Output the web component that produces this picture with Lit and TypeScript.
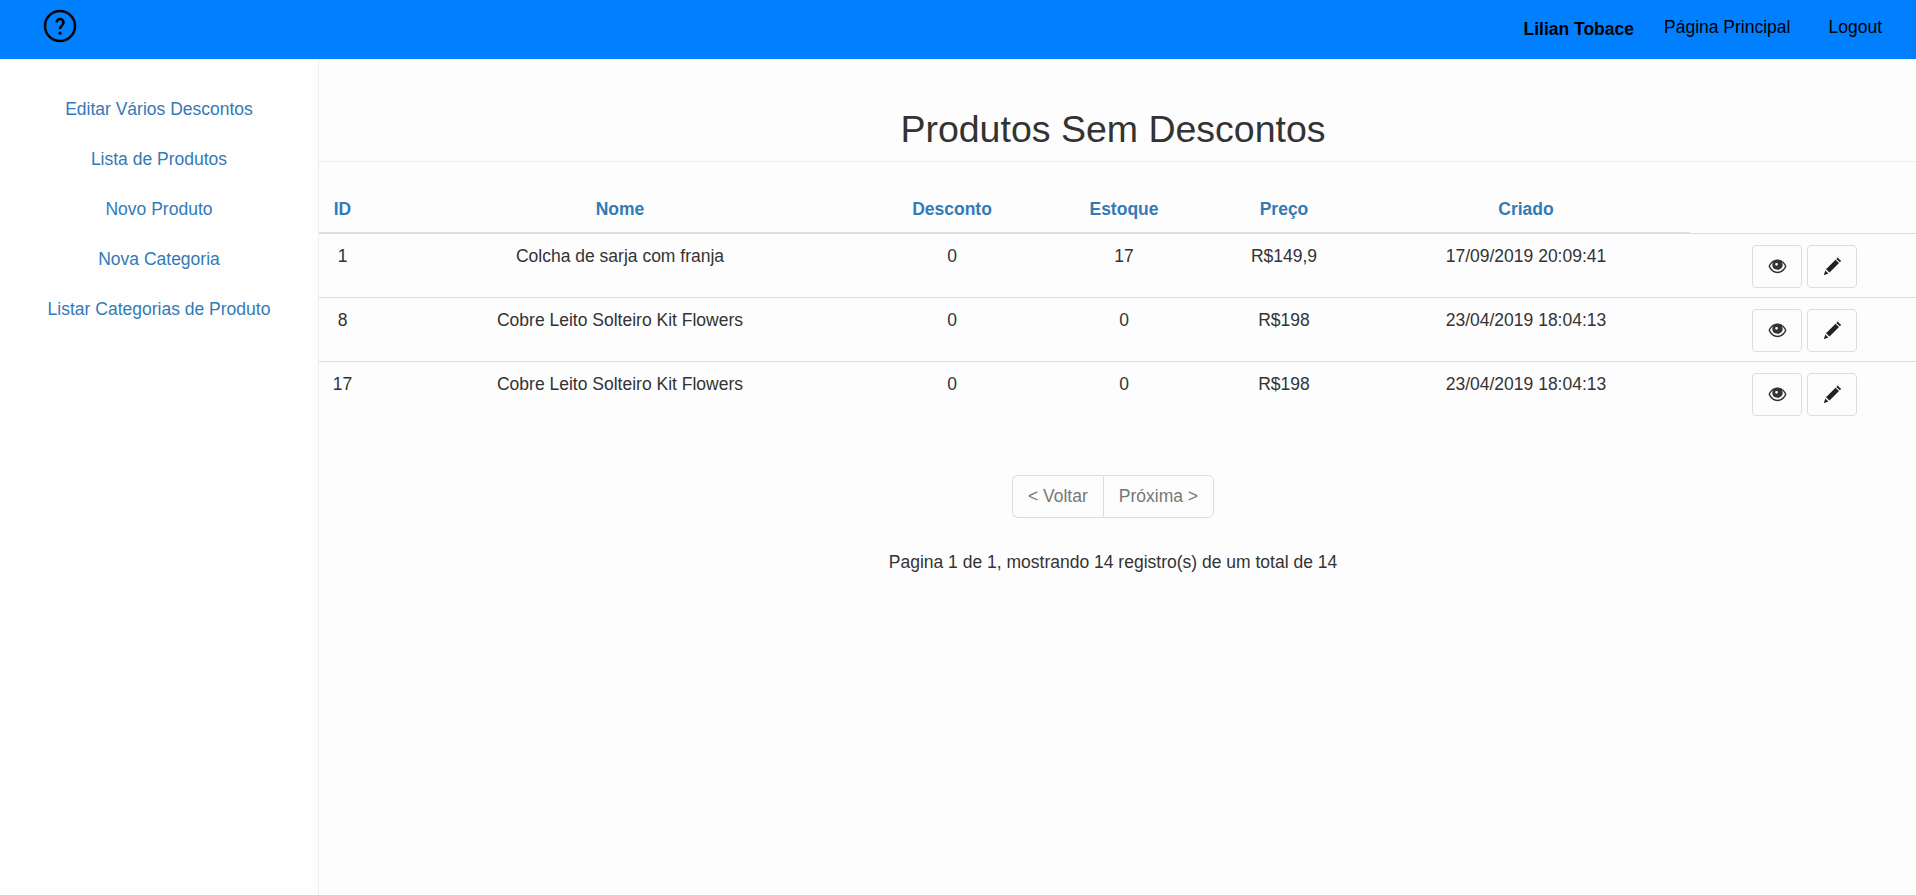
import { LitElement, html, css } from "lit";
import { customElement } from "lit/decorators.js";

const sideLinks = [
  "Editar Vários Descontos",
  "Lista de Produtos",
  "Novo Produto",
  "Nova Categoria",
  "Listar Categorias de Produto",
];

const columns = ["ID", "Nome", "Desconto", "Estoque", "Preço", "Criado"];

const rows = [
  ["1", "Colcha de sarja com franja", "0", "17", "R$149,9", "17/09/2019 20:09:41"],
  ["8", "Cobre Leito Solteiro Kit Flowers", "0", "0", "R$198", "23/04/2019 18:04:13"],
  ["17", "Cobre Leito Solteiro Kit Flowers", "0", "0", "R$198", "23/04/2019 18:04:13"],
];

const eyeIcon = html`<svg class="icon" width="19" height="15" viewBox="0 0 19 15">
  <path
    fill="#333"
    fill-rule="evenodd"
    d="M9.500.5c3.900 0 7.300 2.600 9 6.800-1.700 4.300-5.100 6.900-9 6.900s-7.300-2.600-9-6.900C2.200 3.100 5.600.5 9.500.5zM5.300 3.200C3.900 4.100 2.800 5.500 2 7.300c1.700 3.500 4.300 5.400 7.500 5.400s5.800-1.900 7.500-5.400c-.8-1.800-1.900-3.200-3.300-4.100.6.800 1 1.800 1 2.900 0 2.800-2.300 4.700-5.200 4.700S4.300 8.900 4.300 6.100c0-1.100.4-2.100 1-2.900zm3.200.7a1.400 1.400 0 1 0 0 2.800 1.400 1.400 0 0 0 0-2.800z"
  />
</svg>`;

const pencilIcon = html`<svg class="icon" width="19" height="19" viewBox="0 0 19 19">
  <path fill="#222" d="M14.600.6l3.500 3.300-1.300 1.300-3.500-3.300zM12.500 2.800l3.500 3.300-9.500 9.500-3.500-3.300zM2.300 13.400l3.100 3-4.600 1.900z" />
</svg>`;

@customElement("app-root")
export class AppRoot extends LitElement {
  static override styles = css`
    :host {
      display: block;
      min-height: 895px;
      background: #fdfdfd;
      color: #333;
      font-family: "Liberation Sans", Arial, sans-serif;
      font-size: 17.5px;
    }

    .topbar {
      display: flex;
      justify-content: space-between;
      height: 59px;
      background: #007fff;
      color: #000;
    }
    .help {
      display: block;
      margin: 9px 0 0 43px;
    }
    .userNav {
      display: flex;
      padding-right: 34px;
      line-height: 54px;
    }
    .userNav .user {
      margin-right: 30px;
      font-weight: 700;
      line-height: 58px;
    }
    .userNav .home {
      margin-right: 38px;
    }

    .body {
      display: flex;
      min-height: 836px;
    }

    .sidebar {
      box-sizing: border-box;
      flex: 0 0 319px;
      padding-top: 25px;
      border-right: 1px solid #eee;
      background: #fefefe;
      text-align: center;
      line-height: 50px;
    }
    .sidebar a {
      display: block;
      color: #337ab7;
    }

    .content {
      flex: 1;
      min-width: 0;
    }
    h1 {
      margin: 0;
      padding: 49px 9px 0 0;
      height: 53px;
      border-bottom: 1px solid #eee;
      font-size: 37.5px;
      font-weight: 400;
      line-height: 42px;
      text-align: center;
    }

    .tableHead,
    .row {
      display: grid;
      text-align: center;
    }
    .headWrap {
      margin-top: 24px;
      border-bottom: 1px solid #ddd;
    }
    .tableHead {
      grid-template-columns: 47px 508px 156px 188px 132px 340px;
      width: 1371px;
      height: 46px;
      border-bottom: 2px solid #ddd;
      margin-bottom: -1px;
      color: #337ab7;
      font-weight: 700;
      line-height: 22px;
    }
    .tableHead div {
      padding-top: 12px;
    }
    .tableHead div:last-child {
      padding-left: 12px;
    }
    .row {
      grid-template-columns: 47px 508px 156px 188px 132px 352px 1fr;
      box-sizing: border-box;
      height: 64px;
      padding-top: 11px;
      line-height: 22px;
    }
    .headWrap + .row {
      height: 63px;
    }
    .row + .row {
      border-top: 1px solid #ddd;
    }
    .actions {
      display: flex;
      gap: 5px;
      padding-left: 50px;
    }
    .btn {
      display: flex;
      align-items: center;
      justify-content: center;
      box-sizing: border-box;
      width: 50px;
      height: 43px;
      border: 1px solid #ddd;
      border-radius: 4px;
    }

    .pager {
      display: flex;
      justify-content: center;
      margin-top: 50px;
      padding-right: 9px;
    }
    .pager span {
      box-sizing: border-box;
      height: 43px;
      padding: 0 15px;
      border: 1px solid #ddd;
      color: #777;
      line-height: 41px;
    }
    .pager span:first-child {
      border-radius: 6px 0 0 6px;
      border-right: 0;
    }
    .pager span:last-child {
      border-radius: 0 6px 6px 0;
    }
    .summary {
      margin-top: 33px;
      padding-right: 9px;
      line-height: 22px;
      text-align: center;
    }
  `;

  override render() {
    return html`
      <div class="topbar">
        <svg class="help" width="34" height="34" viewBox="0 0 34 34" fill="none" stroke="#000">
          <circle cx="17" cy="17" r="15" stroke-width="2.500" />
          <path stroke-width="2.600" d="M13.500 13.500a3.500 3.500 0 1 1 5.600 2.800c-1.300 1-2.100 1.700-2.100 3.700" />
          <circle cx="17" cy="24.200" r="1.600" fill="#000" stroke="none" />
        </svg>
        <div class="userNav">
          <span class="user">Lilian Tobace</span>
          <span class="home">Página Principal</span>
          <span>Logout</span>
        </div>
      </div>
      <div class="body">
        <nav class="sidebar">
          ${sideLinks.map((l) => html`<a>${l}</a>`)}
        </nav>
        <main class="content">
          <h1>Produtos Sem Descontos</h1>
          <div class="headWrap">
            <div class="tableHead">
              ${columns.map((c) => html`<div>${c}</div>`)}
            </div>
          </div>
          ${rows.map(
            (r) => html`<div class="row">
              ${r.map((v) => html`<div>${v}</div>`)}
              <div class="actions">
                <span class="btn">${eyeIcon}</span>
                <span class="btn">${pencilIcon}</span>
              </div>
            </div>`,
          )}
          <div class="pager"><span>&lt; Voltar</span><span>Próxima &gt;</span></div>
          <div class="summary">Pagina 1 de 1, mostrando 14 registro(s) de um total de 14</div>
        </main>
      </div>
    `;
  }
}
